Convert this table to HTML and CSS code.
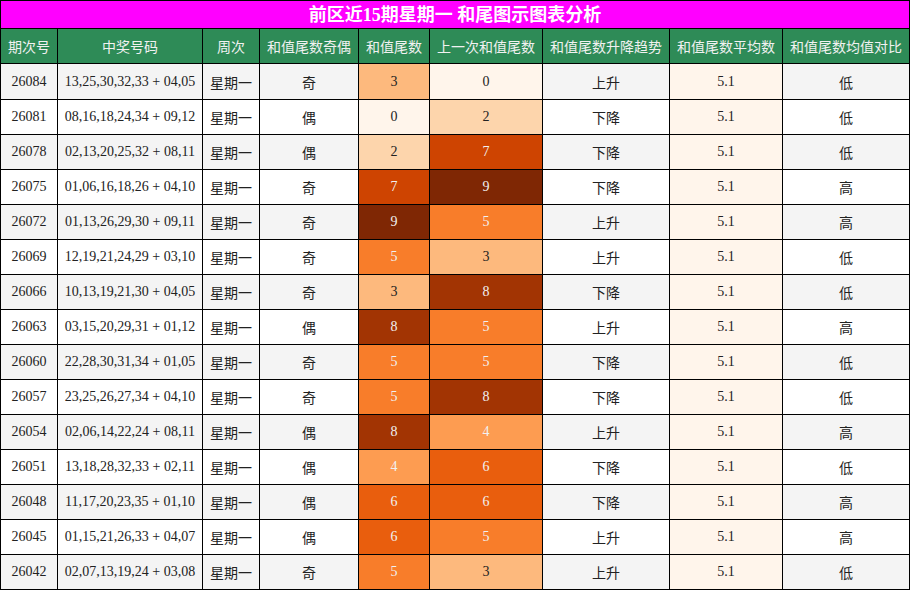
FILE: index.html
```html
<!DOCTYPE html>
<html lang="zh">
<head>
<meta charset="utf-8">
<title>前区近15期星期一 和尾图示图表分析</title>
<link rel="stylesheet" href="styles.css">
</head>
<body>
<table class="chart">
  <colgroup>
    <col class="c-issue"><col class="c-nums"><col class="c-week"><col class="c-parity"><col class="c-tail"><col class="c-prev"><col class="c-trend"><col class="c-avg"><col class="c-cmp">
  </colgroup>
  <thead>
    <tr class="title-row"><th colspan="9" class="title">前区近15期星期一 和尾图示图表分析</th></tr>
    <tr class="head-row">
      <th>期次号</th><th>中奖号码</th><th>周次</th><th>和值尾数奇偶</th><th>和值尾数</th><th>上一次和值尾数</th><th>和值尾数升降趋势</th><th>和值尾数平均数</th><th>和值尾数均值对比</th>
    </tr>
  </thead>
  <tbody>
    <tr><td>26084</td><td>13,25,30,32,33 + 04,05</td><td>星期一</td><td>奇</td><td class="v3">3</td><td class="v0">0</td><td>上升</td><td class="avg">5.1</td><td>低</td></tr>
    <tr><td>26081</td><td>08,16,18,24,34 + 09,12</td><td>星期一</td><td>偶</td><td class="v0">0</td><td class="v2">2</td><td>下降</td><td class="avg">5.1</td><td>低</td></tr>
    <tr><td>26078</td><td>02,13,20,25,32 + 08,11</td><td>星期一</td><td>偶</td><td class="v2">2</td><td class="v7">7</td><td>下降</td><td class="avg">5.1</td><td>低</td></tr>
    <tr><td>26075</td><td>01,06,16,18,26 + 04,10</td><td>星期一</td><td>奇</td><td class="v7">7</td><td class="v9">9</td><td>下降</td><td class="avg">5.1</td><td>高</td></tr>
    <tr><td>26072</td><td>01,13,26,29,30 + 09,11</td><td>星期一</td><td>奇</td><td class="v9">9</td><td class="v5">5</td><td>上升</td><td class="avg">5.1</td><td>高</td></tr>
    <tr><td>26069</td><td>12,19,21,24,29 + 03,10</td><td>星期一</td><td>奇</td><td class="v5">5</td><td class="v3">3</td><td>上升</td><td class="avg">5.1</td><td>低</td></tr>
    <tr><td>26066</td><td>10,13,19,21,30 + 04,05</td><td>星期一</td><td>奇</td><td class="v3">3</td><td class="v8">8</td><td>下降</td><td class="avg">5.1</td><td>低</td></tr>
    <tr><td>26063</td><td>03,15,20,29,31 + 01,12</td><td>星期一</td><td>偶</td><td class="v8">8</td><td class="v5">5</td><td>上升</td><td class="avg">5.1</td><td>高</td></tr>
    <tr><td>26060</td><td>22,28,30,31,34 + 01,05</td><td>星期一</td><td>奇</td><td class="v5">5</td><td class="v5">5</td><td>下降</td><td class="avg">5.1</td><td>低</td></tr>
    <tr><td>26057</td><td>23,25,26,27,34 + 04,10</td><td>星期一</td><td>奇</td><td class="v5">5</td><td class="v8">8</td><td>下降</td><td class="avg">5.1</td><td>低</td></tr>
    <tr><td>26054</td><td>02,06,14,22,24 + 08,11</td><td>星期一</td><td>偶</td><td class="v8">8</td><td class="v4">4</td><td>上升</td><td class="avg">5.1</td><td>高</td></tr>
    <tr><td>26051</td><td>13,18,28,32,33 + 02,11</td><td>星期一</td><td>偶</td><td class="v4">4</td><td class="v6">6</td><td>下降</td><td class="avg">5.1</td><td>低</td></tr>
    <tr><td>26048</td><td>11,17,20,23,35 + 01,10</td><td>星期一</td><td>偶</td><td class="v6">6</td><td class="v6">6</td><td>下降</td><td class="avg">5.1</td><td>高</td></tr>
    <tr><td>26045</td><td>01,15,21,26,33 + 04,07</td><td>星期一</td><td>偶</td><td class="v6">6</td><td class="v5">5</td><td>上升</td><td class="avg">5.1</td><td>高</td></tr>
    <tr><td>26042</td><td>02,07,13,19,24 + 03,08</td><td>星期一</td><td>奇</td><td class="v5">5</td><td class="v3">3</td><td>上升</td><td class="avg">5.1</td><td>低</td></tr>
  </tbody>
</table>
</body>
</html>
```
FILE: styles.css
```css
html, body {
  margin: 0;
  padding: 0;
  background: #ffffff;
}

.chart {
  border-collapse: separate;
  border-spacing: 0;
  table-layout: fixed;
  width: 910px;
  border-top: 1px solid #000;
  border-left: 1px solid #000;
  font-family: "Liberation Serif", "Noto Sans CJK SC", serif;
  font-size: 14px;
  color: #222;
}

.c-issue { width: 57px; }
.c-nums { width: 145px; }
.c-week { width: 57px; }
.c-parity { width: 99px; }
.c-tail { width: 71px; }
.c-prev { width: 113px; }
.c-trend { width: 127px; }
.c-avg { width: 113px; }
.c-cmp { width: 127px; }

.chart th,
.chart td {
  box-sizing: border-box;
  padding: 0;
  border-right: 1px solid #000;
  border-bottom: 1px solid #000;
  text-align: center;
  vertical-align: middle;
  white-space: nowrap;
  overflow: hidden;
}

.title {
  height: 28px;
  background: #ff00ff;
  color: #ffffff;
  font-family: "Liberation Serif", "Noto Sans CJK SC", serif;
  font-size: 18px;
  font-weight: bold;
  line-height: 26px;
}

.head-row th {
  height: 35px;
  background: #2e8b57;
  color: #f1f1f1;
  font-family: "Noto Sans CJK SC", sans-serif;
  font-size: 14px;
  font-weight: normal;
}

.chart tbody td {
  height: 35px;
}

.chart tbody tr:first-child td {
  height: 36px;
}

.chart tbody tr:nth-child(odd) { background: #f4f4f4; }
.chart tbody tr:nth-child(even) { background: #ffffff; }

.avg { background: #fff5eb; color: #222; }

.v0 { background: #fff5eb; color: #222; }
.v2 { background: #fdd5ac; color: #222; }
.v3 { background: #fdb97d; color: #222; }
.v4 { background: #fd9c51; color: #f1f1f1; }
.v5 { background: #f87d2a; color: #f1f1f1; }
.v6 { background: #e95e0d; color: #f1f1f1; }
.v7 { background: #ce4401; color: #f1f1f1; }
.v8 { background: #a23403; color: #f1f1f1; }
.v9 { background: #7f2704; color: #f1f1f1; }
```
